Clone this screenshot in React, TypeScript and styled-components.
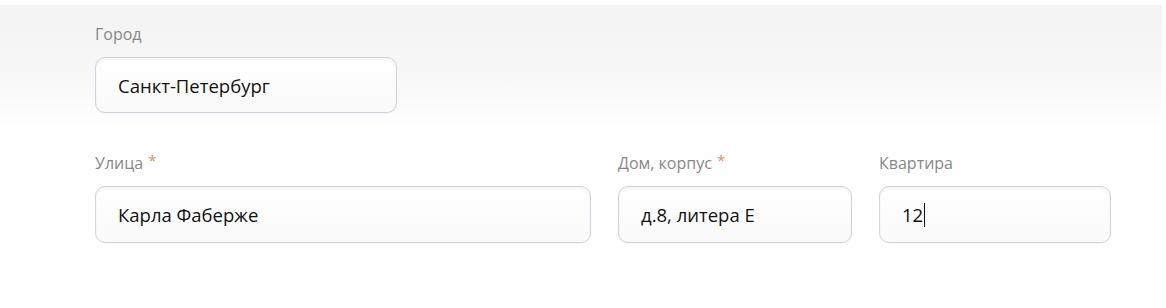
import React from 'react';
import styled, { createGlobalStyle } from 'styled-components';

const GlobalStyle = createGlobalStyle`
  body {
    margin: 0;
    background: #ffffff;
    font-family: 'Open Sans', 'Noto Sans', sans-serif;
  }
`;

const Page = styled.div`
  width: 1166px;
  height: 308px;
  padding-top: 5px;
  box-sizing: border-box;
`;

const CityPanel = styled.section`
  margin-right: 4px;
  padding: 19px 0 17px 95px;
  background: linear-gradient(180deg, #f3f3f3 0%, #f7f7f7 50%, #ffffff 100%);
`;

const AddressRow = styled.section`
  display: grid;
  grid-template-columns: 496px 234px 232px;
  column-gap: 27px;
  padding: 23px 0 0 95px;
`;

const Field = styled.div<{ $width?: number }>`
  display: flex;
  flex-direction: column;
  gap: 13px;
  width: ${(p) => (p.$width ? `${p.$width}px` : 'auto')};
`;

const Label = styled.label`
  font-size: 16px;
  line-height: 20px;
  color: #888888;
  white-space: nowrap;
`;

const Required = styled.span`
  color: #e58f5c;
  font-size: 15px;
  margin-left: 5px;
  position: relative;
  top: -3px;
`;

const Box = styled.div<{ $height?: number }>`
  display: flex;
  align-items: center;
  height: ${(p) => p.$height ?? 56}px;
  box-sizing: border-box;
  padding: 0 22px;
  border: 1px solid #d3d2de;
  border-radius: 10px;
  background: linear-gradient(180deg, #ffffff 0%, #fafafa 100%);
  box-shadow: inset 0 2px 3px rgba(0, 0, 0, 0.05), 0 1px 1px rgba(0, 0, 0, 0.03);
  font-size: 18.5px;
  color: #111111;
  white-space: nowrap;
`;

const Caret = styled.span`
  display: inline-block;
  width: 1px;
  height: 24px;
  margin-left: 1px;
  background: #111111;
`;

export default function App() {
  return (
    <Page>
      <GlobalStyle />
      <CityPanel>
        <Field $width={302}>
          <Label>Город</Label>
          <Box>Санкт-Петербург</Box>
        </Field>
      </CityPanel>
      <AddressRow>
        <Field>
          <Label>
            Улица<Required>*</Required>
          </Label>
          <Box $height={57}>Карла Фаберже</Box>
        </Field>
        <Field>
          <Label>
            Дом, корпус<Required>*</Required>
          </Label>
          <Box $height={57}>д.8, литера Е</Box>
        </Field>
        <Field>
          <Label>Квартира</Label>
          <Box $height={57}>
            12
            <Caret />
          </Box>
        </Field>
      </AddressRow>
    </Page>
  );
}
